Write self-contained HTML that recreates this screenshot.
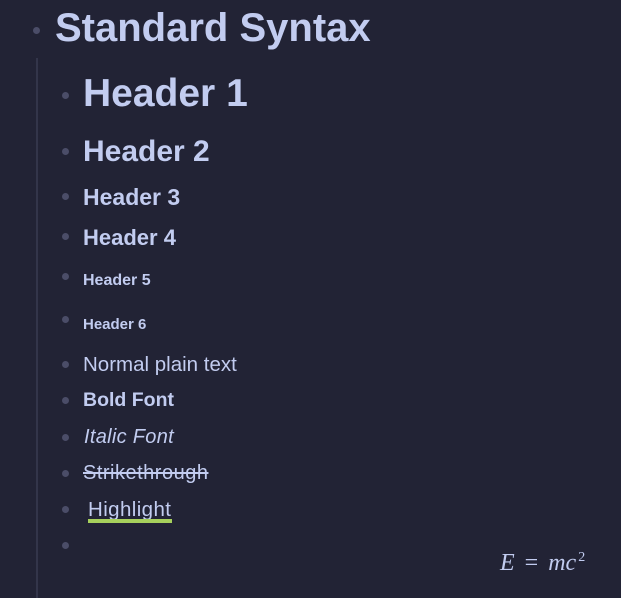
<!DOCTYPE html><html><head><style>
body{margin:0;width:621px;height:594px;background:#222335;overflow:hidden;position:relative;font-family:"Liberation Sans",sans-serif;color:#c2ccf0}
.t{position:absolute;line-height:1;white-space:nowrap}
.b{position:absolute;width:7px;height:7px;border-radius:50%;background:#4b4d68}
.line{position:absolute;left:36px;top:58px;width:2px;height:540px;background:#33354a}
</style></head><body>
<div class="line"></div>
<div class="b" style="left:33px;top:27px"></div>
<div class="t" style="left:55px;top:8px;font-size:40px;font-weight:bold">Standard Syntax</div>
<div class="b" style="left:62px;top:92px"></div>
<div class="t" style="left:83px;top:74px;font-size:39px;font-weight:bold">Header 1</div>
<div class="b" style="left:62px;top:148px"></div>
<div class="t" style="left:83px;top:137px;font-size:30px;font-weight:bold">Header 2</div>
<div class="b" style="left:62px;top:193px"></div>
<div class="t" style="left:83px;top:186px;font-size:23px;font-weight:bold">Header 3</div>
<div class="b" style="left:62px;top:233px"></div>
<div class="t" style="left:83px;top:227px;font-size:22px;font-weight:bold">Header 4</div>
<div class="b" style="left:62px;top:273px"></div>
<div class="t" style="left:83px;top:273px;font-size:16px;font-weight:bold">Header 5</div>
<div class="b" style="left:62px;top:316px"></div>
<div class="t" style="left:83px;top:317px;font-size:15px;font-weight:bold">Header 6</div>
<div class="b" style="left:62px;top:361px"></div>
<div class="t" style="left:83px;top:355px;font-size:20.5px">Normal plain text</div>
<div class="b" style="left:62px;top:397px"></div>
<div class="t" style="left:83px;top:391px;font-size:19.5px;font-weight:bold">Bold Font</div>
<div class="b" style="left:62px;top:434px"></div>
<div class="t" style="left:84px;top:427px;font-size:20px;font-style:italic;letter-spacing:0.3px">Italic Font</div>
<div class="b" style="left:62px;top:470px"></div>
<div class="t" style="left:83px;top:463px;font-size:20px;letter-spacing:0.5px;text-decoration:line-through">Strikethrough</div>
<div class="b" style="left:62px;top:506px"></div>
<div class="t" style="left:88px;top:500px;font-size:20.5px;letter-spacing:0.4px">Highlight</div>
<div style="position:absolute;left:88px;top:519px;width:84px;height:4px;background:#a6d05c"></div>
<div class="b" style="left:62px;top:542px"></div>
<div class="t" style="left:500px;top:551px;font-size:24px;font-family:'Liberation Serif',serif;word-spacing:4px"><i>E</i> = <i>mc</i><sup style="font-size:14px;margin-left:2px">2</sup></div>
</body></html>
